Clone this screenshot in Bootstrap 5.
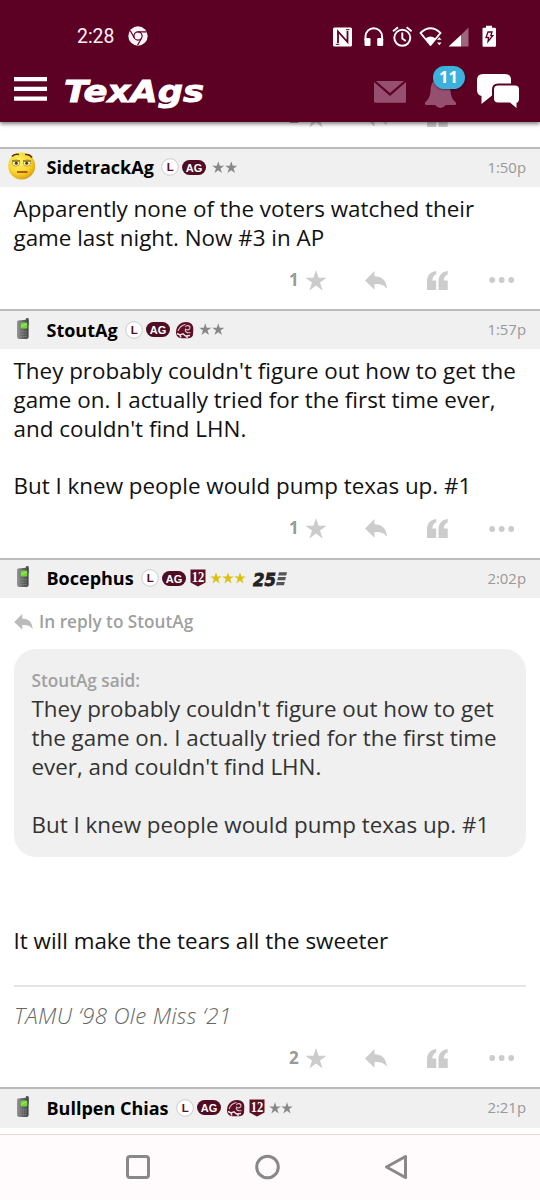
<!DOCTYPE html>
<html lang="en">
<head>
<meta charset="utf-8">
<meta name="viewport" content="width=device-width, initial-scale=1">
<title>TexAgs</title>
<link href="https://cdn.jsdelivr.net/npm/bootstrap@5.3.0/dist/css/bootstrap.min.css" rel="stylesheet">
<style>
body{font-family:"Open Sans",sans-serif;font-size:22.4px;line-height:28.8px;color:#111;background:#fff;height:1200px;overflow:hidden}
svg{display:block;flex:none}
.topbar{height:122px;background:#5c0024;box-shadow:0 2px 4px rgba(0,0,0,.5);position:relative;z-index:2}
.statusbar{height:73px;padding:0 43px 0 77px}
.clock{font:400 19.4px/24px Roboto,sans-serif;color:#fdf3f7;padding-top:1px}
.mainbar{height:49px;padding:0 20px 0 13px}
.count-pill{position:absolute;left:9px;top:-10px;width:32px;height:23px;border-radius:12px;background:#3db1dc;color:#fff;font-weight:700;font-size:16.5px;line-height:22px;text-align:center;box-shadow:0 1px 2px rgba(0,0,0,.4)}
.peek{height:24.6px;overflow:hidden}
.peek .actions{margin-top:-32px}
.post-head{height:40.5px;background:#f0f0f0;border-top:2px solid #bbb;padding:0 14px 1px 8px}
.avatar{width:38.5px}
.username{font-weight:700;font-size:18px;line-height:24px;color:#000;white-space:nowrap}
.stamp{font-size:14.9px;color:#999}
.post-text{padding:7.8px 13.5px 0}
.actions{height:56.4px;padding:0 25px 1px 0;color:#ccc}
.likes{font-weight:700;font-size:17px;color:#999;width:10px;margin-right:6px}
.reply-to{height:51px;padding:0 14px 3px;font-size:17.2px;font-weight:600;color:#a0a0a0}
.bubble{margin:0 14px;height:208px;border-radius:22px;background:#f0f0f0;padding:17.6px 17.5px;color:#333}
.said{font-size:17.2px;font-weight:600;color:#a0a0a0}
.sig{margin:29px 14px 2px;border-top:2px solid #e5e5e5;padding-top:15px;height:44px;font-style:italic;font-weight:300;letter-spacing:.33px;color:#666}
.navkeys{height:66px;background:#fffafb;border-top:1px solid #f3d9d5;padding:0 132px 2px 125px}
</style>
</head>
<body>
<svg width="0" height="0" class="position-absolute">
<defs>
<linearGradient id="pg" x1="0" x2="1"><stop offset="0" stop-color="#999"/><stop offset=".35" stop-color="#747474"/><stop offset="1" stop-color="#444"/></linearGradient>
<radialGradient id="fg" cx=".4" cy=".35" r=".7"><stop offset="0" stop-color="#fff36b"/><stop offset=".6" stop-color="#f9d52c"/><stop offset="1" stop-color="#d99a0c"/></radialGradient>
<symbol id="star" viewBox="0 0 22 21"><path fill="currentColor" d="M11 0l2.6 7.800h8L15 12.500l2.600 7.900L11 15.600l-6.600 4.800L7 12.500.4 7.800h8z"/></symbol>
<symbol id="reply" viewBox="0 0 22 19"><path fill="currentColor" d="M9.500 0v5.200C16 5.400 21.500 8.500 21.900 17.800C18.500 13.500 15 12.900 9.500 13.100V18.700L0 9.500z"/></symbol>
<symbol id="quote" viewBox="0 0 21 19"><path fill="currentColor" d="M9.200 0v3.400C6.600 4.200 5.400 6.400 5.300 9.600H9.200V19H0V10C0 4.500 3.500.700 9.200 0zM20.700 0v3.400C18.100 4.200 16.900 6.400 16.800 9.600H20.700V19H11.500V10C11.500 4.500 15 .700 20.700 0z"/></symbol>
<symbol id="dots" viewBox="0 0 26 6"><g fill="currentColor"><circle cx="3.200" cy="3" r="2.900"/><circle cx="12.700" cy="3" r="2.900"/><circle cx="22.200" cy="3" r="2.900"/></g></symbol>
<symbol id="lbadge" viewBox="0 0 18 18"><circle cx="9" cy="9" r="8.300" fill="#fff" stroke="#ccc"/><text x="9.200" y="13" text-anchor="middle" font-family="Liberation Sans" font-weight="700" font-size="11.500" fill="#5c0f25">L</text></symbol>
<symbol id="agbadge" viewBox="0 0 24 15"><rect width="24" height="15" rx="7.500" fill="#500c22"/><text x="12" y="11.500" text-anchor="middle" font-family="Liberation Sans" font-weight="700" font-size="11" fill="#fff">AG</text></symbol>
<symbol id="helmet" viewBox="0 0 19 18"><path d="M1 12C1 5 5 1 11 1C16 1 18.500 4 18.300 8L18 14C17 17 14 17.500 9 17.300C4 17.500 1.500 16 1 12z" fill="#5c0f25"/><path d="M10.500 6c1-2.500 5-1.500 4.400 1.200-.500 2-3 2.200-4.400 1-1 2 1 4.300 5 3.300M3 10c1.500-4 4-6 7.500-6.500" fill="none" stroke="#dcc5cd" stroke-width="1.100"/><path d="M2 12.500l3 1.500 3-1.200 2.500 2.200 4.500-.5M5 14.500l1 2M12 15.500v1.500" fill="none" stroke="#f0e4e8" stroke-width="1.500"/></symbol>
<symbol id="shield" viewBox="0 0 16 18"><path d="M.5.500h15v13L8 17.500.5 13.500z" fill="#5c0f25"/><text x="8" y="12.700" text-anchor="middle" textLength="12.500" lengthAdjust="spacingAndGlyphs" font-family="Liberation Serif" font-weight="700" font-size="14.500" fill="#fff">12</text></symbol>
<symbol id="phone" viewBox="0 0 14 22"><rect x="9.800" y="0" width="2.800" height="8" rx="1" fill="#555"/><path d="M2 2.500L12.600 1.500V19q0 2-2 2H3.500Q1 21 1 19V4q0-1.500 1-1.500z" fill="url(#pg)"/><rect x="4.600" y="4.500" width="6.700" height="6" rx="1.500" fill="#70d737"/><path d="M5 8.500L11 5.500" stroke="#a2ec6d"/><path d="M4.500 13.500H10.700M4.500 16H10.700M4.500 18.500H10.700" stroke="#888" stroke-width=".9" stroke-dasharray="1.500 .8"/></symbol>
</defs></svg>

<header class="topbar">
  <div class="statusbar d-flex align-items-center">
    <span class="clock">2:28</span>
    <svg width="20" height="20" viewBox="0 0 20 20" style="margin-left:14px;margin-top:-1px"><circle cx="10" cy="10" r="9.700" fill="#fdf3f7"/><g fill="none" stroke="#5c0024" stroke-width="1.200"><circle cx="10" cy="10" r="4.100"/><path d="M10 5.900H18.700M6.400 12L2.300 4.800M13.600 12L9.500 19.300"/></g></svg>
    <svg class="ms-auto" width="165" height="24" viewBox="332 24.500 165 24" fill="#fff">
      <rect x="333" y="27" width="19" height="19" rx="1.500"/><path d="M338 42.500V31l9.500 10.500V30.500" fill="none" stroke="#5c0024" stroke-width="1.800"/><path d="M335.800 43.800h3.500M346 29.200h3.500" stroke="#5c0024" stroke-width="1"/>
      <path d="M365.500 40v-4a8.300 8.300 0 0 1 16.600 0v4" fill="none" stroke="#fff" stroke-width="2"/><rect x="364.500" y="37.500" width="6" height="8" rx="1.200"/><rect x="377.200" y="37.500" width="6" height="8" rx="1.200"/>
      <g fill="none" stroke="#fff" stroke-width="1.900"><circle cx="402.300" cy="37.300" r="8"/><path d="M402.300 32v6l3.500 2.500M393 30.800l5-4M411.600 30.800l-5-4"/></g>
      <path d="M420.500 32.500q10-9.500 20 0L430.500 44.500z" fill="none" stroke="#fff" stroke-width="1.900" stroke-linejoin="round"/><path d="M425.500 38q5-4 10 0l-5 7z"/><path d="M439.300 36.800l2.300 2.500h-4.600zM439.300 44.800l2.300-2.700h-4.600z"/>
      <path d="M468.500 27v19H461V34.500z" opacity=".4"/><path d="M448.500 46L461 34.500V46z"/>
      <path d="M486 25.200h6v2h2.800q1.200 0 1.200 1.200V45q0 1.200-1.200 1.200H483.700q-1.200 0-1.200-1.200V28.400q0-1.200 1.200-1.200H486z"/><path d="M488 31.500h4l-1.200 3.600h2L488 41l.6-4H486z" fill="none" stroke="#5c0024" stroke-width="1.300"/>
    </svg>
  </div>
  <div class="mainbar d-flex align-items-start">
    <svg width="34" height="28" viewBox="0 0 34 28" fill="#fff" style="margin-top:3px"><path d="M1 1h33v4.300H1zM1 10.700h33V15H1zM1 20.400h33v4.300H1z"/></svg>
    <svg width="145" height="40" viewBox="0 0 145 40" style="margin-left:16px"><text x="1" y="28.700" textLength="140" lengthAdjust="spacingAndGlyphs" font-family="DejaVu Sans" font-weight="700" font-style="italic" font-size="31" fill="#fff" stroke="#fff" stroke-width=".9">TexAgs</text></svg>
    <svg class="ms-auto" width="32" height="22" viewBox="0 0 32 22" style="margin:8px 1px 0 0" fill="#95506f"><path d="M0 1L16 15 32 1v19.500q0 1.200-1.200 1.200H1.200Q0 21.700 0 20.500zM2 0h28L16 12z"/></svg>
    <div class="position-relative" style="margin:3px 20.500px 0 17px">
      <svg width="33" height="33" viewBox="0 0 33 33" fill="#95506f"><path d="M16 2C8 3 7 9 6.500 15C6 20 5 23 1 26.500Q.5 29 2 29H11q5 6 11 0h9q1.500 0 1-2.500C28 23 27 20 26.500 15C26 9 24 3 16 2z"/></svg>
      <span class="count-pill">11</span>
    </div>
    <svg width="43" height="36" viewBox="477 73 43 36" fill="#fff"><path d="M483 74h22q6 0 6 6v3.500H498q-6 0-6 6v6L481.500 104V96Q477 95 477 90V80q0-6 6-6z"/><path d="M498 85.500h17q4 0 4 4v9q0 4-2.500 4.300V108l-6.500-5.500H498q-4 0-4-4v-9q0-4 4-4z"/></svg>
  </div>
</header>

<div class="peek"><div class="actions d-flex align-items-center justify-content-end">
  <span class="likes">2</span>
  <svg width="22" height="21"><use href="#star"/></svg><svg width="22" height="19" style="margin-left:38px"><use href="#reply"/></svg><svg width="21" height="19" style="margin-left:40px"><use href="#quote"/></svg><svg width="26" height="6" style="margin-left:41px"><use href="#dots"/></svg>
</div></div>

<article>
  <div class="post-head d-flex align-items-center">
    <div class="avatar"><svg width="28" height="29" viewBox="0 0 28 29" style="margin-top:-4px"><circle cx="13.700" cy="15" r="13.500" fill="url(#fg)"/><path d="M4 5.500Q6 2.500 11 3.500M17 3.500q5-.5 7 3" fill="none" stroke="#57380a" stroke-width="1.600"/><g fill="#fff8c0" stroke="#b58f25" stroke-width=".8"><ellipse cx="8" cy="12" rx="3.800" ry="3.200"/><ellipse cx="19" cy="12" rx="3.800" ry="3.200"/></g><path d="M4 10h8M15 10h8" stroke="#a98a2a" stroke-width="2"/><circle cx="8.300" cy="12.300" r="1.500" fill="#4b3716"/><circle cx="18.700" cy="12.300" r="1.500" fill="#4b3716"/><path d="M9 21h10.500" stroke="#a8420f" stroke-width="1.700"/></svg></div>
    <span class="username">SidetrackAg</span>
    <svg width="18" height="18" style="margin-left:7.500px"><use href="#lbadge"/></svg><svg width="24" height="15" style="margin-left:3px"><use href="#agbadge"/></svg>
    <div class="d-flex" style="margin-left:6px;color:#888"><svg width="12.500" height="12.500"><use href="#star"/></svg><svg width="12.500" height="12.500"><use href="#star"/></svg></div>
    <span class="stamp ms-auto">1:50p</span>
  </div>
  <div class="post-text">Apparently none of the voters watched their<br>game last night. Now #3 in AP</div>
  <div class="actions d-flex align-items-center justify-content-end">
    <span class="likes">1</span><svg width="22" height="21"><use href="#star"/></svg><svg width="22" height="19" style="margin-left:38px"><use href="#reply"/></svg><svg width="21" height="19" style="margin-left:40px"><use href="#quote"/></svg><svg width="26" height="6" style="margin-left:41px"><use href="#dots"/></svg>
  </div>
</article>

<article>
  <div class="post-head d-flex align-items-center">
    <div class="avatar"><svg width="14" height="22" style="margin:-2px 0 0 8px"><use href="#phone"/></svg></div>
    <span class="username">StoutAg</span>
    <svg width="18" height="18" style="margin-left:7.500px"><use href="#lbadge"/></svg><svg width="24" height="15" style="margin-left:3px"><use href="#agbadge"/></svg><svg width="19" height="18" style="margin-left:5px"><use href="#helmet"/></svg>
    <div class="d-flex" style="margin-left:5px;color:#888"><svg width="12.500" height="12.500"><use href="#star"/></svg><svg width="12.500" height="12.500"><use href="#star"/></svg></div>
    <span class="stamp ms-auto">1:57p</span>
  </div>
  <div class="post-text">They probably couldn't figure out how to get the<br>game on. I actually tried for the first time ever,<br>and couldn't find LHN.<br><br>But I knew people would pump texas up. #1</div>
  <div class="actions d-flex align-items-center justify-content-end">
    <span class="likes">1</span><svg width="22" height="21"><use href="#star"/></svg><svg width="22" height="19" style="margin-left:38px"><use href="#reply"/></svg><svg width="21" height="19" style="margin-left:40px"><use href="#quote"/></svg><svg width="26" height="6" style="margin-left:41px"><use href="#dots"/></svg>
  </div>
</article>

<article>
  <div class="post-head d-flex align-items-center">
    <div class="avatar"><svg width="14" height="22" style="margin:-2px 0 0 8px"><use href="#phone"/></svg></div>
    <span class="username">Bocephus</span>
    <svg width="18" height="18" style="margin-left:7.500px"><use href="#lbadge"/></svg><svg width="24" height="15" style="margin-left:3px"><use href="#agbadge"/></svg><svg width="16" height="18" style="margin-left:4px"><use href="#shield"/></svg>
    <div class="d-flex" style="margin-left:4px;color:#dcc010"><svg width="12" height="12"><use href="#star"/></svg><svg width="12" height="12"><use href="#star"/></svg><svg width="12" height="12"><use href="#star"/></svg></div>
    <svg width="36" height="20" viewBox="0 -2 36 20" style="margin:1px 0 0 6px"><text x="1" y="14.500" textLength="23" lengthAdjust="spacingAndGlyphs" font-family="DejaVu Sans" font-weight="700" font-style="italic" font-size="18" fill="#222" stroke="#222" stroke-width=".8">25</text><path d="M27 1.200h8l-.8 3.200h-8zM26 6h8l-.8 3.200h-8zM24.800 11h8l-.8 3.200h-8z" fill="#555"/></svg>
    <span class="stamp ms-auto">2:02p</span>
  </div>
  <div class="reply-to d-flex align-items-center"><svg width="19" height="16" style="margin:-1px 6px 0 0;color:#bbb"><use href="#reply"/></svg>In reply to StoutAg</div>
  <div class="bubble"><div class="said">StoutAg said:</div>They probably couldn't figure out how to get<br>the game on. I actually tried for the first time<br>ever, and couldn't find LHN.<br><br>But I knew people would pump texas up. #1</div>
  <div class="post-text" style="margin-top:62px">It will make the tears all the sweeter</div>
  <div class="sig">TAMU ‘98 Ole Miss ‘21</div>
  <div class="actions d-flex align-items-center justify-content-end">
    <span class="likes">2</span><svg width="22" height="21"><use href="#star"/></svg><svg width="22" height="19" style="margin-left:38px"><use href="#reply"/></svg><svg width="21" height="19" style="margin-left:40px"><use href="#quote"/></svg><svg width="26" height="6" style="margin-left:41px"><use href="#dots"/></svg>
  </div>
</article>

<article style="height:47px">
  <div class="post-head d-flex align-items-center">
    <div class="avatar"><svg width="14" height="22" style="margin:-2px 0 0 8px"><use href="#phone"/></svg></div>
    <span class="username">Bullpen Chias</span>
    <svg width="18" height="18" style="margin-left:7.500px"><use href="#lbadge"/></svg><svg width="24" height="15" style="margin-left:3px"><use href="#agbadge"/></svg><svg width="19" height="18" style="margin-left:5px"><use href="#helmet"/></svg><svg width="16" height="18" style="margin-left:4px"><use href="#shield"/></svg>
    <div class="d-flex" style="margin-left:4px;color:#888"><svg width="12" height="12"><use href="#star"/></svg><svg width="12" height="12"><use href="#star"/></svg></div>
    <span class="stamp ms-auto">2:21p</span>
  </div>
</article>

<nav class="navkeys d-flex align-items-center justify-content-between" aria-label="System">
  <svg width="26" height="26" fill="none" stroke="#888" stroke-width="3"><rect x="2.500" y="2.500" width="21" height="21" rx="2.500"/></svg>
  <svg width="26" height="26" fill="none" stroke="#888" stroke-width="3"><circle cx="12.500" cy="13" r="10.800"/></svg>
  <svg width="24" height="26" fill="none" stroke="#888" stroke-width="3" stroke-linejoin="round"><path d="M21.500 2.500V23.500L2.500 13z"/></svg>
</nav>
<script src="https://cdn.jsdelivr.net/npm/bootstrap@5.3.0/dist/js/bootstrap.bundle.min.js"></script>
</body>
</html>
